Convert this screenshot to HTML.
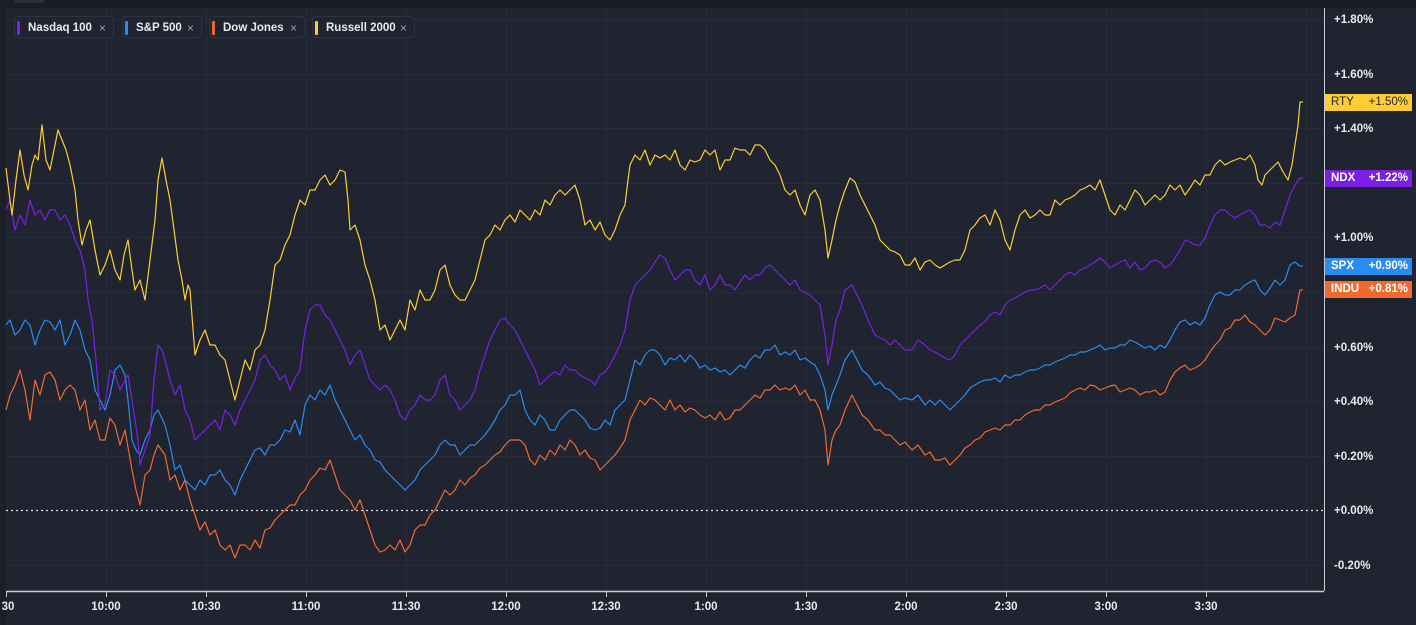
<!DOCTYPE html>
<html><head><meta charset="utf-8"><style>
html,body{margin:0;padding:0;width:1416px;height:625px;overflow:hidden;background:#1f2430;font-family:"Liberation Sans",sans-serif}
svg{position:absolute;left:0;top:0}
.lg{position:absolute;top:16px;height:22px;border:1px solid #2e3441;border-radius:4px;background:#1f2430;color:#e8eaee;font-size:11.5px;font-weight:bold;line-height:22px;box-sizing:border-box}
.lg i{position:absolute;left:2px;top:4px;width:3px;height:14px;border-radius:1px}
.lg span{position:absolute;left:13px}
.lg b{position:absolute;right:7px;color:#9aa0aa;font-weight:normal;font-size:12px}
.tag{position:absolute;left:1325px;width:87px;height:17px;font-size:11.5px;font-weight:bold;line-height:17px;color:#fff}
.tag span{position:absolute;left:6px}.tag em{position:absolute;right:4px;font-style:normal}
</style></head><body>
<svg width="1416" height="625">
<rect x="0" y="0" width="1416" height="8" fill="#191d26"/>
<rect x="14" y="0" width="30" height="3" fill="#2a2f3a"/>
<rect x="0" y="0" width="6" height="625" fill="#1b1f28"/>
<g stroke="#272c38" stroke-width="1">
<line x1="106.5" y1="8" x2="106.5" y2="591"/><line x1="206.5" y1="8" x2="206.5" y2="591"/><line x1="306.5" y1="8" x2="306.5" y2="591"/><line x1="406.5" y1="8" x2="406.5" y2="591"/><line x1="506.5" y1="8" x2="506.5" y2="591"/><line x1="606.5" y1="8" x2="606.5" y2="591"/><line x1="706.5" y1="8" x2="706.5" y2="591"/><line x1="806.5" y1="8" x2="806.5" y2="591"/><line x1="906.5" y1="8" x2="906.5" y2="591"/><line x1="1006.5" y1="8" x2="1006.5" y2="591"/><line x1="1106.5" y1="8" x2="1106.5" y2="591"/><line x1="1206.5" y1="8" x2="1206.5" y2="591"/><line x1="1306.5" y1="8" x2="1306.5" y2="591"/>
<line x1="6" y1="19.5" x2="1324" y2="19.5"/><line x1="6" y1="74.5" x2="1324" y2="74.5"/><line x1="6" y1="128.5" x2="1324" y2="128.5"/><line x1="6" y1="183.5" x2="1324" y2="183.5"/><line x1="6" y1="237.5" x2="1324" y2="237.5"/><line x1="6" y1="292.5" x2="1324" y2="292.5"/><line x1="6" y1="347.5" x2="1324" y2="347.5"/><line x1="6" y1="401.5" x2="1324" y2="401.5"/><line x1="6" y1="456.5" x2="1324" y2="456.5"/><line x1="6" y1="565.5" x2="1324" y2="565.5"/>
</g>
<line x1="6" y1="510.5" x2="1324" y2="510.5" stroke="#d8dbe0" stroke-width="1.3" stroke-dasharray="2,3"/>
<g fill="none" stroke-width="1.2" stroke-linejoin="round">
<polyline stroke="#f06a30" points="6,410 10,395 15,385 20,370 25,390 30,420 35,380 40,395 45,375 50,372 55,380 60,400 65,390 70,385 75,390 80,410 85,400 90,430 95,420 100,440 105,440 110,418 115,425 120,445 125,430 132,470 136,490 140,505 145,475 150,470 154,455 158,445 165,455 170,480 175,475 180,490 185,480 190,500 195,515 200,530 205,522 210,535 215,530 220,545 225,550 230,545 235,558 240,545 245,545 250,550 255,540 260,548 265,530 270,528 275,520 280,515 285,510 290,505 295,505 300,495 305,490 310,480 315,475 320,468 325,470 330,460 335,475 340,490 345,495 350,500 355,510 360,500 365,515 370,530 375,545 380,552 385,550 390,545 395,550 400,540 405,552 410,545 415,530 420,525 425,525 430,515 435,510 440,500 445,490 450,495 455,490 460,480 465,485 470,478 475,475 480,468 485,465 490,460 495,455 500,452 505,445 510,440 515,440 520,440 525,445 530,460 535,465 540,455 545,460 550,450 555,455 560,445 565,450 570,440 575,445 580,455 585,450 590,458 595,460 600,470 605,465 610,460 615,455 620,448 625,440 630,420 635,410 640,400 645,405 650,398 655,400 660,405 665,410 670,400 675,410 680,405 685,412 690,408 695,410 700,415 705,418 710,415 715,420 720,412 725,420 730,418 735,410 740,410 745,405 750,400 755,395 760,398 765,390 770,390 775,385 780,390 785,388 790,390 795,385 800,395 805,390 810,400 815,400 820,410 825,430 828,465 832,440 836,430 840,425 845,410 852,395 857,405 862,415 868,420 875,430 880,430 885,435 890,435 895,440 900,445 905,442 912,450 918,445 925,455 930,452 935,460 940,460 945,458 950,465 955,460 960,455 965,448 970,445 975,440 980,438 985,432 990,430 995,428 1000,430 1005,425 1010,425 1015,420 1020,420 1025,415 1030,412 1035,410 1040,410 1045,405 1050,405 1055,402 1060,400 1065,398 1070,393 1075,390 1080,388 1085,390 1090,385 1095,386 1100,390 1105,388 1110,386 1115,385 1120,392 1125,390 1130,388 1135,390 1140,395 1145,392 1150,392 1155,390 1160,395 1165,392 1170,380 1175,372 1180,368 1185,365 1190,370 1195,368 1200,365 1205,360 1210,352 1215,345 1220,340 1225,330 1230,328 1235,320 1240,320 1245,315 1250,322 1255,325 1260,330 1265,335 1270,330 1275,318 1280,320 1285,322 1290,318 1295,315 1300,290 1303,290"/>
<polyline stroke="#2a8cf0" points="6,325 10,320 15,335 20,330 25,320 30,325 35,345 40,330 45,320 50,322 55,330 60,320 65,345 70,335 75,320 80,330 85,350 90,360 95,390 100,400 105,410 110,395 115,370 120,365 125,375 128,400 132,440 136,450 140,455 145,440 150,430 154,415 158,410 165,425 170,445 175,470 180,465 185,480 190,485 195,490 200,480 205,485 210,475 215,475 220,470 225,480 230,485 235,495 240,480 245,470 250,460 255,450 260,448 265,455 270,445 275,445 280,440 285,430 290,432 295,420 300,435 305,405 310,395 315,400 320,390 325,395 330,385 335,400 340,410 345,420 350,430 355,440 360,435 365,445 370,450 375,460 380,462 385,470 390,475 395,480 400,485 405,490 410,485 415,480 420,470 425,465 430,460 435,455 440,445 445,440 450,445 455,445 460,455 465,450 470,445 475,445 480,440 485,435 490,428 495,420 500,410 505,405 510,395 515,395 520,390 525,410 530,420 535,425 540,415 545,420 550,430 555,430 560,420 565,415 570,410 575,410 580,415 585,420 590,428 595,430 600,428 605,420 610,425 615,410 620,405 625,400 630,380 635,360 640,365 645,355 650,350 655,350 660,355 665,365 670,358 675,360 680,355 685,362 690,355 695,360 700,368 705,365 710,370 715,368 720,372 725,370 730,375 735,370 740,365 745,368 750,360 755,355 760,358 765,350 770,350 775,345 780,355 785,352 790,355 795,350 800,360 805,358 810,362 815,365 820,375 825,390 828,410 832,395 836,385 840,375 845,360 852,350 857,360 862,370 868,375 875,385 880,382 885,388 890,390 895,395 900,400 905,398 912,400 918,395 925,405 930,400 935,405 940,400 945,405 950,410 955,405 960,400 965,395 970,388 975,385 980,382 985,380 990,380 995,378 1000,382 1005,375 1010,378 1015,375 1020,375 1025,372 1030,370 1035,370 1040,368 1045,365 1050,365 1055,362 1060,360 1065,358 1070,355 1075,355 1080,352 1085,352 1090,350 1095,348 1100,345 1105,350 1110,348 1115,348 1120,345 1125,345 1130,340 1135,342 1140,345 1145,348 1150,346 1155,350 1160,345 1165,348 1170,340 1175,330 1180,322 1185,320 1190,325 1195,322 1200,325 1205,318 1210,305 1215,295 1220,292 1225,295 1230,295 1235,290 1240,290 1245,285 1250,282 1255,280 1260,290 1265,295 1270,288 1275,280 1280,285 1285,280 1290,265 1295,262 1300,266 1303,266"/>
<polyline stroke="#7b1fe8" points="6,210 10,200 15,230 20,215 25,225 30,200 35,215 40,210 45,220 50,210 55,210 60,220 65,215 70,225 75,240 80,250 85,270 88,300 92,320 96,360 100,410 105,405 110,370 115,375 120,390 125,380 128,375 132,400 135,420 138,440 140,465 145,450 150,435 154,380 158,345 162,350 165,360 170,380 175,395 180,385 185,410 190,420 195,440 200,435 205,430 210,425 215,420 220,430 225,410 230,415 235,425 240,410 245,400 250,390 255,380 260,360 265,355 270,365 275,370 280,380 285,375 290,390 295,378 300,370 305,330 310,310 315,305 320,305 325,315 330,320 335,330 340,340 345,350 350,365 355,355 360,350 365,365 370,380 375,385 380,390 385,385 390,390 395,400 400,415 405,420 410,410 415,405 420,395 425,400 430,400 435,395 440,380 445,375 450,395 455,400 460,410 465,405 470,400 475,390 480,370 485,355 490,340 495,330 500,320 505,318 510,325 515,330 520,340 525,350 530,360 535,370 540,385 545,380 550,375 555,372 560,375 565,365 570,370 575,370 580,375 585,378 590,380 595,385 600,375 605,372 610,365 615,355 620,345 625,330 630,300 635,285 640,280 645,275 650,270 655,262 660,255 665,258 670,270 675,280 680,275 685,270 690,270 695,280 700,285 705,275 710,290 715,285 720,275 725,285 730,285 735,290 740,282 745,275 750,280 755,275 760,275 765,268 770,265 775,270 780,275 785,280 790,285 795,280 800,290 805,292 810,295 815,300 820,305 825,335 828,365 832,345 836,320 840,310 845,290 852,285 857,295 862,305 868,320 875,335 880,338 885,340 890,345 895,340 900,345 905,350 912,350 918,340 925,345 930,350 935,352 940,355 945,358 950,360 955,355 960,345 965,340 970,335 975,330 980,325 985,322 990,315 995,312 1000,315 1005,305 1010,300 1015,298 1020,295 1025,292 1030,290 1035,290 1040,288 1045,285 1050,290 1055,285 1060,280 1065,275 1070,272 1075,275 1080,270 1085,268 1090,265 1095,262 1100,258 1105,262 1110,268 1115,265 1120,262 1125,260 1130,268 1135,262 1140,270 1145,268 1150,262 1155,260 1160,262 1165,268 1170,265 1175,258 1180,250 1185,240 1190,242 1195,245 1200,245 1205,238 1210,225 1215,215 1220,210 1225,210 1230,215 1235,218 1240,215 1245,212 1250,210 1255,215 1260,225 1265,225 1270,228 1275,222 1280,225 1285,210 1290,195 1295,185 1300,178 1303,178"/>
<polyline stroke="#ffcc33" points="6,168 10,200 12,215 16,180 20,150 24,175 28,190 32,165 35,155 38,160 42,125 46,160 50,170 54,150 58,130 62,140 66,150 70,165 75,190 78,220 82,245 86,230 90,220 95,250 100,275 105,265 110,250 115,270 120,280 124,255 128,240 132,270 135,290 140,280 145,300 150,260 155,220 158,180 162,158 166,180 170,200 174,230 178,260 182,280 185,300 188,285 190,290 195,355 200,340 205,330 210,345 215,345 220,355 225,360 230,380 235,400 240,380 245,360 250,370 255,350 260,345 265,330 270,300 275,265 280,260 285,245 290,235 295,215 300,200 305,205 310,190 315,190 320,180 325,175 330,185 335,180 340,170 345,172 348,200 350,230 355,225 360,240 365,265 370,280 375,300 380,330 385,325 390,340 395,330 400,320 405,330 410,300 415,310 420,290 425,300 430,300 435,290 440,270 445,265 450,285 455,295 460,300 465,300 470,290 475,280 480,260 485,240 490,235 495,225 500,230 505,220 510,215 515,222 520,210 525,215 530,220 535,210 540,215 545,200 550,205 555,195 560,190 565,195 570,190 575,185 580,200 585,225 590,220 595,230 600,222 605,235 610,240 615,230 620,215 625,205 628,180 630,165 635,155 640,160 645,150 650,165 655,155 660,158 665,155 670,160 675,150 680,165 685,170 690,160 695,162 700,160 705,150 710,155 715,150 720,170 725,160 730,160 735,148 740,150 745,150 750,155 755,145 760,145 765,150 770,160 775,165 780,175 785,190 790,195 795,190 800,205 805,215 810,195 815,190 820,200 825,230 828,258 832,240 836,220 840,205 845,190 850,178 855,182 860,195 865,205 870,215 875,225 880,240 885,245 890,250 895,252 900,255 905,265 910,265 915,258 920,270 925,262 930,260 935,265 940,268 945,265 950,262 955,260 960,260 965,250 970,230 975,225 980,218 985,215 990,225 995,210 1000,220 1005,240 1010,250 1015,230 1020,215 1025,210 1030,218 1035,215 1040,210 1045,215 1050,215 1055,200 1060,205 1065,200 1070,198 1075,195 1080,190 1085,188 1090,185 1095,190 1100,180 1105,195 1110,210 1115,215 1120,205 1125,210 1130,200 1135,190 1140,195 1145,205 1150,200 1155,195 1160,200 1165,195 1170,185 1175,190 1180,185 1185,195 1190,188 1195,180 1200,185 1205,175 1210,175 1215,165 1220,160 1225,165 1230,162 1235,160 1240,158 1245,160 1250,155 1255,165 1258,180 1262,185 1265,175 1270,170 1275,165 1278,162 1282,170 1288,180 1292,165 1295,145 1298,125 1300,102 1303,102"/>
</g>
<line x1="1324.5" y1="8" x2="1324.5" y2="591" stroke="#c7cad0" stroke-width="1"/>
<line x1="6" y1="591.5" x2="1324" y2="591.5" stroke="#c7cad0" stroke-width="1.5"/>
<g stroke="#c7cad0" stroke-width="1"><line x1="6.5" y1="591" x2="6.5" y2="597"/><line x1="106.5" y1="591" x2="106.5" y2="597"/><line x1="206.5" y1="591" x2="206.5" y2="597"/><line x1="306.5" y1="591" x2="306.5" y2="597"/><line x1="406.5" y1="591" x2="406.5" y2="597"/><line x1="506.5" y1="591" x2="506.5" y2="597"/><line x1="606.5" y1="591" x2="606.5" y2="597"/><line x1="706.5" y1="591" x2="706.5" y2="597"/><line x1="806.5" y1="591" x2="806.5" y2="597"/><line x1="906.5" y1="591" x2="906.5" y2="597"/><line x1="1006.5" y1="591" x2="1006.5" y2="597"/><line x1="1106.5" y1="591" x2="1106.5" y2="597"/><line x1="1206.5" y1="591" x2="1206.5" y2="597"/></g>
<g fill="#e8eaee" font-family="Liberation Sans" font-size="11.5" font-weight="bold" text-anchor="middle">
<text x="8" y="610">30</text><text x="106" y="610">10:00</text><text x="206" y="610">10:30</text><text x="306" y="610">11:00</text><text x="406" y="610">11:30</text><text x="506" y="610">12:00</text><text x="606" y="610">12:30</text><text x="706" y="610">1:00</text><text x="806" y="610">1:30</text><text x="906" y="610">2:00</text><text x="1006" y="610">2:30</text><text x="1106" y="610">3:00</text><text x="1206" y="610">3:30</text>
</g>
<g fill="#e8eaee" font-family="Liberation Sans" font-size="11.5" font-weight="bold">
<text x="1334" y="23">+1.80%</text><text x="1334" y="78">+1.60%</text><text x="1334" y="132">+1.40%</text><text x="1334" y="241">+1.00%</text><text x="1334" y="351">+0.60%</text><text x="1334" y="405">+0.40%</text><text x="1334" y="460">+0.20%</text><text x="1334" y="514">+0.00%</text><text x="1334" y="569">-0.20%</text>
</g>
</svg>
<div class="lg" style="left:14px;width:100px"><i style="background:#7b1fe8"></i><span>Nasdaq 100</span><b>×</b></div>
<div class="lg" style="left:122px;width:80px"><i style="background:#2a8cf0"></i><span>S&amp;P 500</span><b>×</b></div>
<div class="lg" style="left:209px;width:96px"><i style="background:#f06a30"></i><span>Dow Jones</span><b>×</b></div>
<div class="lg" style="left:312px;width:103px"><i style="background:#ffcc33"></i><span>Russell 2000</span><b>×</b></div>
<div class="tag" style="top:94px;background:#ffcc33;color:#1f2430;font-weight:normal"><span>RTY</span><em>+1.50%</em></div>
<div class="tag" style="top:170px;background:#7b1fe8"><span>NDX</span><em>+1.22%</em></div>
<div class="tag" style="top:258px;background:#2a8cf0"><span>SPX</span><em>+0.90%</em></div>
<div class="tag" style="top:281px;background:#f06a30"><span>INDU</span><em>+0.81%</em></div>
</body></html>
